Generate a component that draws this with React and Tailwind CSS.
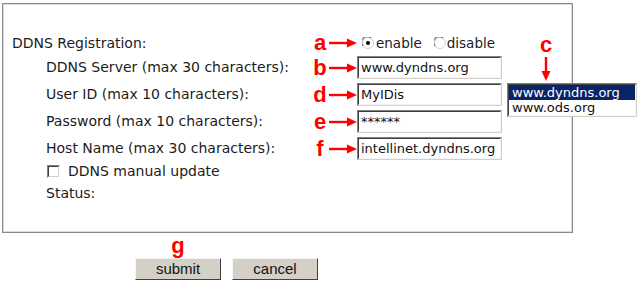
import React from "react";

const Arrow = () => (
  <svg width="28" height="10" viewBox="0 0 28 10" className="shrink-0">
    <line x1="0" y1="5" x2="20" y2="5" stroke="#ff0000" strokeWidth="2.4" />
    <polygon points="18,0.5 28,5 18,9.5" fill="#ff0000" />
  </svg>
);

const Mark = ({ letter }) => (
  <div className="flex items-center">
    <span className="w-[14px] text-center font-['Liberation_Sans',sans-serif] font-bold text-[22px] leading-none text-[#ff0000]">
      {letter}
    </span>
    <span className="ml-[2px] flex">
      <Arrow />
    </span>
  </div>
);

const TextBox = ({ value }) => (
  <div className="w-[145px] h-[23px] border border-t-[#808080] border-l-[#808080] border-b-[#d4d0c8] border-r-[#d4d0c8]">
    <div className="h-full border border-t-[#404040] border-l-[#404040] border-b-[#f4f4f4] border-r-[#f4f4f4] bg-white pl-[2px] flex items-center text-[13px] text-[#111] whitespace-nowrap overflow-hidden">
      {value}
    </div>
  </div>
);

const Radio = ({ checked }) => (
  <svg width="12" height="12" viewBox="0 0 12 12" className="shrink-0">
    <circle cx="6" cy="6" r="5.5" fill="#ffffff" stroke="#d4d0c8" />
    <path d="M1.2 9 A5 5 0 0 1 9 1.2" fill="none" stroke="#808080" strokeWidth="1.2" />
    {checked && <circle cx="6" cy="6" r="2" fill="#000" />}
  </svg>
);

const Row = ({ label, indent = true, letter, children, className = "" }) => (
  <div className={`flex items-center ${className}`}>
    <div className={`w-[309px] whitespace-nowrap ${indent ? "pl-[42px]" : "pl-[8px]"}`}>{label}</div>
    {letter && <Mark letter={letter} />}
    {children}
  </div>
);

export default function App() {
  return (
    <div className="relative w-[641px] h-[286px] bg-white overflow-hidden font-['DejaVu_Sans',sans-serif] text-[14px] text-[#1c1c1c]">
      <div className="ml-[2px] mt-[3px] w-[571px] h-[230px] border border-[#8a8a8a]">
        <div className="h-full border border-[#dcdad4] pt-[28px] flex flex-col">
          <Row label="DDNS Registration:" indent={false} letter="a" className="h-[20px]">
            <div className="ml-[5px] flex items-center text-[13.5px]">
              <Radio checked />
              <span className="ml-[2px]">enable</span>
              <span className="ml-[12px] flex items-center">
                <Radio />
                <span className="ml-[1px]">disable</span>
              </span>
            </div>
          </Row>
          <Row label="DDNS Server (max 30 characters):" letter="b" className="mt-[3px]">
            <TextBox value="www.dyndns.org" />
          </Row>
          <Row label="User ID (max 10 characters):" letter="d" className="mt-[4px]">
            <TextBox value="MyIDis" />
          </Row>
          <Row label="Password (max 10 characters):" letter="e" className="mt-[4px]">
            <TextBox value="******" />
          </Row>
          <Row label="Host Name (max 30 characters):" letter="f" className="mt-[4px]">
            <TextBox value="intellinet.dyndns.org" />
          </Row>
          <div className="h-[22px] flex items-center pl-[43px]">
            <span className="w-[13px] h-[13px] border border-t-[#808080] border-l-[#808080] border-b-[#ffffff] border-r-[#ffffff] bg-[#d4d0c8] p-0">
              <span className="block w-full h-full border border-t-[#404040] border-l-[#404040] border-b-[#d4d0c8] border-r-[#d4d0c8] bg-white" />
            </span>
            <span className="ml-[8px]">DDNS manual update</span>
          </div>
          <div className="h-[22px] flex items-center pl-[42px]">Status:</div>
        </div>
      </div>

      <div className="flex flex-col items-start pl-[135px]">
        <span className="w-[86px] text-center font-['Liberation_Sans',sans-serif] font-bold text-[22px] leading-none text-[#ff0000] mt-[2px]">
          g
        </span>
        <div className="flex gap-[11px] mt-[1px] font-['Liberation_Sans',sans-serif] text-[15px] text-[#111]">
          <div className="w-[86px] h-[22px] bg-[#d4d0c8] border border-t-[#f4f4f4] border-l-[#f4f4f4] border-b-[#404040] border-r-[#404040] flex items-center justify-center">
            submit
          </div>
          <div className="w-[86px] h-[22px] bg-[#d4d0c8] border border-t-[#f4f4f4] border-l-[#f4f4f4] border-b-[#404040] border-r-[#404040] flex items-center justify-center">
            cancel
          </div>
        </div>
      </div>

      {/* annotation c pointing at the open list */}
      <div className="absolute left-[538px] top-[34px] w-[16px] flex flex-col items-center">
        <span className="font-['Liberation_Sans',sans-serif] font-bold text-[22px] leading-none text-[#ff0000]">c</span>
        <svg width="10" height="24" viewBox="0 0 10 24" className="mt-[1px]">
          <line x1="5" y1="0" x2="5" y2="16" stroke="#ff0000" strokeWidth="2.4" />
          <polygon points="0.5,14 9.5,14 5,24" fill="#ff0000" />
        </svg>
      </div>

      {/* open drop-down list */}
      <div className="absolute left-[507px] top-[83px] w-[130px] h-[34px] border border-t-[#808080] border-l-[#808080] border-b-[#d4d0c8] border-r-[#d4d0c8]">
        <div className="h-full border border-t-[#404040] border-l-[#404040] border-b-[#f4f4f4] border-r-[#f4f4f4] bg-white text-[13px] leading-[15px]">
          <div className="bg-[#0a246a] text-white pl-[3px]">www.dyndns.org</div>
          <div className="pl-[3px] text-[#111]">www.ods.org</div>
        </div>
      </div>
    </div>
  );
}
